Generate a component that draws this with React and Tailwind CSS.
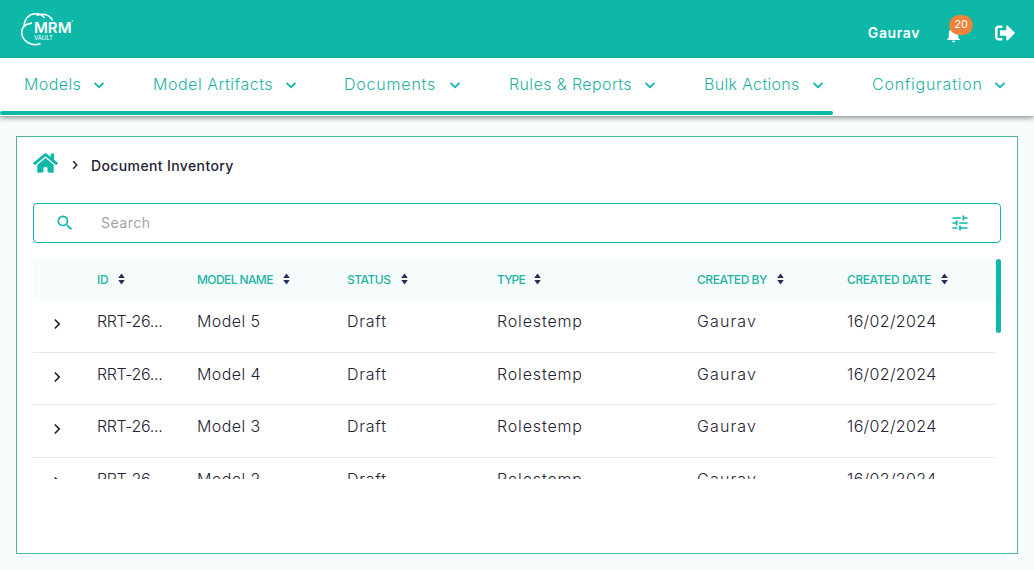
import React from "react";
import { FaHome, FaSignOutAlt } from "react-icons/fa";
import { MdSearch, MdTune, MdNotifications } from "react-icons/md";

const menu = [
  { label: "Models", box: "w-[129px]", text: "tracking-[0.4px]" },
  { label: "Model Artifacts", box: "w-[192px]", text: "tracking-[0.53px]" },
  { label: "Documents", box: "w-[164px]", text: "-ml-px tracking-[0.8px]" },
  { label: "Rules & Reports", box: "w-[195px]", text: "tracking-[0.4px]" },
  { label: "Bulk Actions", box: "w-[168px]", text: "tracking-[0.32px]" },
  { label: "Configuration", box: "w-[182px]", text: "tracking-[0.75px]" },
];

const columns = [
  { label: "ID", text: "tracking-[-0.2px]", gap: "gap-[9px]" },
  { label: "MODEL NAME", text: "tracking-[-0.6px]", gap: "gap-[10px]" },
  { label: "STATUS", text: "tracking-[-0.5px]", gap: "gap-[10px]" },
  { label: "TYPE", text: "tracking-[-0.9px]", gap: "gap-[9.5px]" },
  { label: "CREATED BY", text: "tracking-[-0.45px]", gap: "gap-[10.5px]" },
  { label: "CREATED DATE", text: "tracking-[-0.4px]", gap: "gap-[9.500px]" },
];

const rows = ["Model 5", "Model 4", "Model 3", "Model 2"];

const grid = "grid grid-cols-[64px_100px_150px_150px_200px_150px_149px]";

function Chevron({ className }) {
  return (
    <svg viewBox="0 0 12 12" className={className} fill="none" stroke="currentColor" strokeWidth="1.7">
      <path d="M1.5 3.8 6 8.2l4.5-4.4" />
    </svg>
  );
}

function SortIcon() {
  return (
    <svg viewBox="0 0 7 12" className="mb-[2px] h-3 w-[7px] shrink-0 fill-[#2b2d5b]">
      <path d="M3.5 0.4 6.8 5H.2zM3.5 11.6.2 7h6.6z" />
    </svg>
  );
}

function Logo() {
  return (
    <svg viewBox="0 0 56 36" className="h-9 w-14" fill="none" stroke="#fff">
      <path d="M20.500 32.500C14.500 35.500 5.500 32.500 2.500 25.500 0 18.500 3.500 13.200 12 12.200" strokeWidth="1.700" />
      <path d="M4 15.500C4.500 7 9.500 2.700 15.500 2.700c4 0 7.200 1.500 9 4.300" strokeWidth="1.500" />
      <path d="M16.500 4.500C22.500 1.800 30 3.500 32.500 9.500" strokeWidth="1.500" />
      <text x="14" y="22.300" textLength="37.500" lengthAdjust="spacingAndGlyphs" fill="#fff" stroke="none" className="font-['Inter',sans-serif] text-[15px] font-semibold">MRM</text>
      <text x="14" y="29" textLength="19" lengthAdjust="spacingAndGlyphs" fill="#fff" stroke="none" className="font-['Inter',sans-serif] text-[6.500px]">VAULT</text>
      <circle cx="52.300" cy="10" r=".7" fill="#fff" stroke="none" />
    </svg>
  );
}

export default function App() {
  return (
    <div className="flex h-[570px] w-[1034px] flex-col overflow-hidden bg-[#f5fcfb] font-['Inter',sans-serif] text-[#1f2333]">
      <header className="flex h-[58px] shrink-0 items-center bg-[#0db8a9] pl-5 pr-[19px] text-white">
        <Logo />
        <span className="ml-auto mt-[7px] text-[14px] font-semibold tracking-[0.6px]">Gaurav</span>
        <div className="relative ml-[24px] mt-[10px]">
          <MdNotifications className="size-[19px]" />
          <span className="absolute -top-[10px] left-[5px] flex h-5 w-6 items-center justify-center rounded-full bg-[#ee8439] text-[11px]">20</span>
        </div>
        <FaSignOutAlt className="ml-[32px] mt-[8px] size-5" />
      </header>

      <nav className="relative z-10 h-[58px] shrink-0 bg-white shadow-[0_2px_5px_rgba(0,0,0,0.42)]">
        <div className="flex h-[53px] items-center text-[#1fb3a5]">
          {menu.map((m) => (
            <div key={m.label} className={`flex shrink-0 items-center justify-between pl-6 pr-6 ${m.box}`}>
              <span className={`-mt-0.5 whitespace-nowrap text-[16px] font-light ${m.text}`}>{m.label}</span>
              <Chevron className="size-3 text-[#0db8a9]" />
            </div>
          ))}
        </div>
        <div className="h-1 w-[833px] rounded-sm bg-[#0db8a9]" />
      </nav>

      <main className="mx-4 mt-5 flex h-[418px] flex-col border border-[#4bb5a0] bg-white px-4">
        <div className="flex h-[58px] items-center">
          <FaHome className="-mt-1.5 h-[22px] w-[25px] text-[#0db8a9]" />
          <Chevron className="-mt-0.5 ml-3 size-[10px] -rotate-90" />
          <h1 className="-mt-0.5 ml-[11px] text-[14px] font-medium tracking-[0.38px]">Document Inventory</h1>
        </div>

        <div className="mt-2 flex h-10 shrink-0 items-center rounded border border-[#0db8a9] pl-[21px] pr-[30px]">
          <MdSearch className="size-5 text-[#0db8a9]" />
          <span className="-mt-0.5 ml-[26px] text-[14px] tracking-[0.5px] text-[#a3a3a8]">Search</span>
          <MdTune className="ml-auto size-5 text-[#0db8a9]" />
        </div>

        <div className="mt-4 flex h-[220px] shrink-0 overflow-hidden">
          <div className="w-[963px] shrink-0">
            <div className={`${grid} h-[41px] items-center rounded-t bg-[#f5fcfb]`}>
              <span />
              {columns.map((c) => (
                <div key={c.label} className={`flex items-center ${c.gap}`}>
                  <span className={`whitespace-nowrap text-[12px] font-medium text-[#1fb3a5] ${c.text}`}>{c.label}</span>
                  <SortIcon />
                </div>
              ))}
            </div>
            {rows.map((name) => (
              <div key={name} className={`${grid} h-[52.500px] items-center border-b border-[#e6e8ee] pb-[9px] text-[16px] font-light`}>
                <Chevron className="ml-[18px] mt-[6px] size-3 -rotate-90" />
                <span className="tracking-[-0.35px]">RRT-26...</span>
                <span className="tracking-[0.4px]">{name}</span>
                <span className="tracking-[0.75px]">Draft</span>
                <span className="tracking-[0.85px]">Rolestemp</span>
                <span className="tracking-[1.1px]">Gaurav</span>
                <span className="tracking-[0.35px]">16/02/2024</span>
              </div>
            ))}
          </div>
          <div className="h-[74px] w-[5px] rounded-full bg-[#0db8a9]" />
        </div>
      </main>
    </div>
  );
}
